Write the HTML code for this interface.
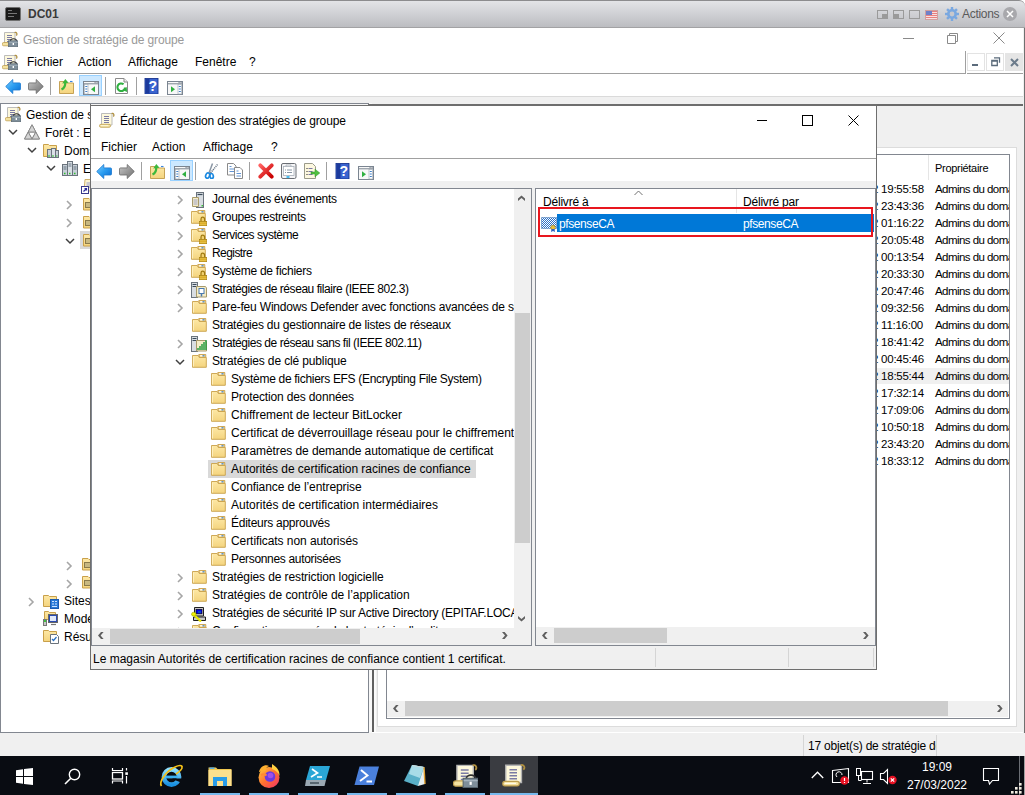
<!DOCTYPE html><html><head><meta charset="utf-8"><style>
*{box-sizing:border-box;margin:0;padding:0}
html,body{width:1025px;height:795px;overflow:hidden;background:#fff;font-family:"Liberation Sans",sans-serif;font-size:12px;color:#000;position:relative}
.a{position:absolute}
.t{position:absolute;white-space:nowrap;line-height:18px;height:18px;margin-top:1px}
svg{position:absolute;overflow:visible}
.clip{position:absolute;overflow:hidden}
.clip svg,.clip .t{position:absolute}
</style></head><body>

<svg width="0" height="0" style="position:absolute">
<defs>
<linearGradient id="gfold" x1="0" y1="0" x2="0" y2="1"><stop offset="0" stop-color="#fde8a6"/><stop offset="1" stop-color="#f4d47e"/></linearGradient>
<linearGradient id="gblue" x1="0" y1="0" x2="1" y2="1"><stop offset="0" stop-color="#7fd0ff"/><stop offset="0.5" stop-color="#2a9cf0"/><stop offset="1" stop-color="#0a6ad0"/></linearGradient>
<linearGradient id="ggray" x1="0" y1="0" x2="1" y2="1"><stop offset="0" stop-color="#c8c8c8"/><stop offset="0.5" stop-color="#9a9a9a"/><stop offset="1" stop-color="#707070"/></linearGradient>
<linearGradient id="gred" x1="0" y1="0" x2="1" y2="1"><stop offset="0" stop-color="#ff6060"/><stop offset="1" stop-color="#c80000"/></linearGradient>
<linearGradient id="gie" x1="0" y1="0" x2="0" y2="1"><stop offset="0" stop-color="#8fe0ff"/><stop offset="1" stop-color="#1a90e0"/></linearGradient>
<linearGradient id="gff" x1="0" y1="0" x2="1" y2="1"><stop offset="0" stop-color="#ffd040"/><stop offset="0.5" stop-color="#ff7030"/><stop offset="1" stop-color="#f0306a"/></linearGradient>
<pattern id="dith" width="2" height="2" patternUnits="userSpaceOnUse"><rect width="2" height="2" fill="#fff"/><rect width="1" height="1" fill="#2a70c8"/><rect x="1" y="1" width="1" height="1" fill="#2a70c8"/></pattern>
<symbol id="fold" viewBox="0 0 16 16">
 <path d="M0.5,1.5 H6.3 L7.3,3.5 H14.3 V13.3 H0.5 Z" fill="url(#gfold)" stroke="#c9a04a" stroke-width="0.9"/>
 <path d="M1.4,2.5 V12.5" stroke="#fff3c8" stroke-width="0.9"/>
 <path d="M6.8,0.5 H13.8 V3.3 H7.5 Z" fill="#f6dc98" stroke="#c9a04a" stroke-width="0.9"/>
 <path d="M8.2,1.8 H10.5" stroke="#fff" stroke-width="1.2"/>
 <path d="M10.5,1.8 H12.5" stroke="#3a86e0" stroke-width="1.2"/>
</symbol>
<symbol id="foldlock" viewBox="0 0 16 16">
 <use href="#fold"/>
 <path d="M10,11.5v-2.5a1.8,1.8 0 0 1 3.6,0v2.5" fill="#f0d070" stroke="#a07a10" stroke-width="1.2"/>
 <rect x="8.3" y="11.3" width="7.4" height="4.6" fill="#d8a820" stroke="#a07a10" stroke-width="0.6"/>
 <path d="M8.5,12.8h7M8.5,14.5h7" stroke="#f0d060" stroke-width="0.6"/>
</symbol>
<symbol id="scroll" viewBox="0 0 16 16">
 <path d="M2.5,1.5 H13 V13 H2.5 Z" fill="#fdf8dc" stroke="#b4b4b4" stroke-width="0.9"/>
 <path d="M12.6,1.6 a1.4,1.6 0 1 1 1.6,2.8" fill="none" stroke="#b09040" stroke-width="1.2"/>
 <path d="M5,4.5h5M5,6.5h5M5,8.5h5M5,10.5h5" stroke="#7a7aa4" stroke-width="1"/>
 <rect x="0.5" y="12.3" width="11" height="3" rx="1.4" fill="#f4e2a0" stroke="#c0a050" stroke-width="0.8"/>
 <path d="M1.8,13.6h7.5" stroke="#fffbe8" stroke-width="0.8"/>
</symbol>
<symbol id="gpmc" viewBox="0 0 16 16">
 <path d="M2.5,1.5 H13 V12 H2.5 Z" fill="#fdf8dc" stroke="#b4b4b4" stroke-width="0.9"/>
 <path d="M12.6,1.6 a1.4,1.6 0 1 1 1.6,2.8" fill="none" stroke="#b09040" stroke-width="1.2"/>
 <path d="M5,4.5h5M5,6.5h5M5,8.5h4M5,10.5h2" stroke="#7a7aa4" stroke-width="1"/>
 <rect x="0.3" y="11.5" width="8" height="3.3" rx="1.4" fill="#f4e2a0" stroke="#c0a050" stroke-width="0.8"/>
 <path d="M8.5,10 a3,2.2 0 0 1 6,0" fill="none" stroke="#303030" stroke-width="1.1"/>
 <rect x="6.5" y="9.8" width="9.5" height="6" fill="#7e8e9a" stroke="#56646e" stroke-width="0.7"/>
 <path d="M6.8,11.3h9" stroke="#a8b6c0" stroke-width="0.8"/>
 <rect x="10.6" y="12" width="1.4" height="2" fill="#fff"/>
</symbol>
<symbol id="back" viewBox="0 0 16 16">
 <path d="M0.7,7.5 L7.8,0.5 V3.9 H14.5 Q15.5,3.9 15.5,5 V10 Q15.5,11 14.5,11 H7.8 V14.5 Z" fill="url(#gblue)" stroke="#1a78d0" stroke-width="0.8" stroke-linejoin="round"/>
</symbol>
<symbol id="fwd" viewBox="0 0 16 16">
 <path d="M15.3,7.5 L8.2,0.5 V3.9 H1.5 Q0.5,3.9 0.5,5 V10 Q0.5,11 1.5,11 H8.2 V14.5 Z" fill="url(#ggray)" stroke="#6a6a6a" stroke-width="0.8" stroke-linejoin="round"/>
</symbol>
<symbol id="fup" viewBox="0 0 16 16">
 <path d="M0.5,2.5 H6 L7,4 H14.5 V14.5 H0.5 Z" fill="url(#gfold)" stroke="#c09a48" stroke-width="0.9"/>
 <path d="M11,2.5 H13.5" stroke="#3a86e0" stroke-width="1.1"/>
 <path d="M2.5,10.5 C4.5,9.5 6.5,7 6.2,3.5" fill="none" stroke="#3cb83c" stroke-width="2.2"/>
 <path d="M3.2,4.5 L6.3,0 L9.5,3.8 Z" fill="#3cb83c"/>
</symbol>
<symbol id="panel" viewBox="0 0 16 16">
 <rect x="0.5" y="1.5" width="15" height="13" fill="#f8f8f8" stroke="#7b8591"/>
 <path d="M0.5,3.8h15" stroke="#7b8591" stroke-width="1"/>
 <path d="M11.5,2.6h1.2M13.5,2.6h1.2" stroke="#7b8591"/>
 <rect x="1.5" y="4.5" width="3.5" height="9.5" fill="#fff" stroke="#9aa3ad" stroke-width="0.6"/>
 <path d="M2.3,6.5h2M2.3,9h2M2.3,11.5h2" stroke="#3f7fc7" stroke-width="1.2"/>
 <path d="M12,6.2 L8,9.2 L12,12.2z" fill="#30b040"/>
</symbol>
<symbol id="apane" viewBox="0 0 16 16">
 <rect x="0.5" y="1.5" width="15" height="13" fill="#f8f8f8" stroke="#7b8591"/>
 <path d="M0.5,3.8h15" stroke="#7b8591" stroke-width="1"/>
 <path d="M11.5,2.6h1.2M13.5,2.6h1.2" stroke="#7b8591"/>
 <rect x="11" y="4.5" width="3.5" height="9.5" fill="#fff" stroke="#9aa3ad" stroke-width="0.6"/>
 <path d="M11.8,6.5h2M11.8,9h2M11.8,11.5h2" stroke="#3f7fc7" stroke-width="1.2"/>
 <path d="M4,6.2 L8,9.2 L4,12.2z" fill="#30b040"/>
</symbol>
<symbol id="refresh" viewBox="0 0 16 16">
 <path d="M1.5,0.5h8.5l3.5,3.5v11.5h-12z" fill="#fff" stroke="#8a8a8a"/>
 <path d="M10,0.5v3.5h3.5" fill="#eee" stroke="#8a8a8a"/>
 <path d="M11,9.5a3.8,3.8 0 1 1 -1.4,-3.2" fill="none" stroke="#2fb040" stroke-width="2.1"/>
 <path d="M8.5,12 L12.8,9 L13,14z" fill="#2fb040"/>
</symbol>
<symbol id="help" viewBox="0 0 16 16">
 <rect x="1" y="0.5" width="13" height="15.5" fill="#3a64d0" stroke="#1a3590" stroke-width="0.9"/>
 <rect x="1.5" y="1" width="4" height="14.5" fill="#1c3a9c"/>
 <text x="8.8" y="13.2" font-family="Liberation Sans" font-size="14" font-weight="bold" fill="#fff" text-anchor="middle">?</text>
</symbol>
<symbol id="cut" viewBox="0 0 16 16">
 <path d="M5,10 L8.5,0.5" stroke="#8a96a4" stroke-width="1.5"/>
 <path d="M6.5,10 L13.5,1.5" stroke="#6a7888" stroke-width="1.5" stroke-dasharray="1.2 0.8"/>
 <ellipse cx="3.6" cy="12.6" rx="1.9" ry="2.7" fill="none" stroke="#1a88e0" stroke-width="1.7" transform="rotate(20 3.6 12.6)"/>
 <ellipse cx="7.6" cy="13" rx="1.7" ry="2.5" fill="none" stroke="#1a88e0" stroke-width="1.7" transform="rotate(-10 7.6 13)"/>
</symbol>
<symbol id="copy" viewBox="0 0 16 16">
 <path d="M0.5,0.5h6l2.5,2.5v9h-8.5z" fill="#fff" stroke="#8a8a8a"/>
 <path d="M7.5,4.5h5.5l2.5,2.5v8.5h-8z" fill="#fff" stroke="#8a8a8a"/>
 <path d="M2.5,3.5h2M2.5,6h4.5M2.5,8.5h4.5M9.5,8h2M9.5,10.5h4.5M9.5,13h4.5" stroke="#3a78c8" stroke-width="0.8"/>
</symbol>
<symbol id="del" viewBox="0 0 16 16">
 <path d="M2.3,2.3 L13.7,13.7 M13.7,2.3 L2.3,13.7" stroke="url(#gred)" stroke-width="3.8" stroke-linecap="round"/>
</symbol>
<symbol id="props" viewBox="0 0 16 16">
 <rect x="0.5" y="0.5" width="14.5" height="15" rx="1.5" fill="#f4f4f6" stroke="#6a6e74"/>
 <rect x="2.5" y="3.5" width="10.5" height="9" fill="#fff" stroke="#a8b0b8" stroke-width="0.8"/>
 <path d="M5,3.5v-1.5h5v1.5" fill="none" stroke="#a8b0b8" stroke-width="0.8"/>
 <path d="M4,7h1M6,7h5M4,9.5h1M6,9.5h5" stroke="#7a8a9a" stroke-width="0.9"/>
 <path d="M5.5,14h3" stroke="#20b0f0" stroke-width="1.6"/>
</symbol>
<symbol id="export" viewBox="0 0 16 16">
 <path d="M0.5,0.5h8l3,3v12h-11z" fill="#fdf8e0" stroke="#9a9a8a"/>
 <path d="M2.5,5.5h1M2.5,8.5h1M2.5,11.5h1" stroke="#222" stroke-width="1"/>
 <path d="M4.5,5.5h4M4.5,8.5h4M4.5,11.5h4" stroke="#6a6aa0" stroke-width="0.9"/>
 <path d="M7,9 h4 v-2.8 l4.8,3.8 l-4.8,3.8 v-2.8 h-4z" fill="#50c040" stroke="#309020" stroke-width="0.5"/>
</symbol>
<symbol id="evlog" viewBox="0 0 16 16">
 <rect x="5.5" y="0.5" width="7" height="15" fill="#d8dde2" stroke="#6a737c"/>
 <path d="M6.5,2.5h5" stroke="#3a4a5a" stroke-width="1.2"/>
 <rect x="10.5" y="13" width="1.5" height="1.5" fill="#3ac03a"/>
 <path d="M1.5,5.5h6v9h-6z" fill="#f4ecc8" stroke="#a89a6a"/>
 <path d="M2.5,8h4M2.5,10h4M2.5,12h4" stroke="#8a92c8" stroke-width="0.8"/>
</symbol>
<symbol id="netw" viewBox="0 0 16 16">
 <rect x="0.5" y="0.5" width="6" height="15" fill="#d8dde2" stroke="#6a737c"/>
 <path d="M1.5,2.5h4M1.5,4.5h4" stroke="#3a4a5a" stroke-width="1"/>
 <path d="M5.5,4.5h9l1,1.5v9h-10z" fill="#f4ecc8" stroke="#a89a6a"/>
 <rect x="8" y="6.5" width="5" height="5" fill="#fff" stroke="#4a7ab0"/>
 <path d="M10.5,11.5v3" stroke="#4a7ab0" stroke-width="1.5"/>
</symbol>
<symbol id="wifi" viewBox="0 0 16 16">
 <rect x="0.5" y="0.5" width="6" height="15" fill="#d8dde2" stroke="#6a737c"/>
 <path d="M1.5,2.5h4M1.5,4.5h4" stroke="#3a4a5a" stroke-width="1"/>
 <path d="M5.5,4.5h9l1,1.5v9h-10z" fill="#f4ecc8" stroke="#a89a6a"/>
 <path d="M7,14v-2M9,14v-4M11,14v-6M13,14v-8M15,14v-10" stroke="#1a9a3a" stroke-width="1.4"/>
</symbol>
<symbol id="ipsec" viewBox="0 0 16 16">
 <path d="M3.5,1.5 H12.5 V10 H3.5 Z" fill="#c8c8c8" stroke="#202020" stroke-width="1"/>
 <rect x="5" y="3.3" width="6" height="4.5" fill="#0000f0" stroke="#000" stroke-width="0.6"/>
 <path d="M7,6 H10" stroke="#10a0a0" stroke-width="0.9"/>
 <path d="M2.5,11 H14.5 V14.5 H2.5 Z" fill="#c8c8c8" stroke="#202020" stroke-width="1"/>
 <path d="M2,8 L10,15.5" stroke="#e8e800" stroke-width="2.2"/>
 <ellipse cx="2.8" cy="8.2" rx="2.3" ry="2" fill="#f0f000" stroke="#909000" stroke-width="0.5"/>
</symbol>
<symbol id="cert" viewBox="0 0 16 16">
 <rect x="0.5" y="1.5" width="15" height="11" fill="url(#dith)"/>
 <path d="M0.5,1.5h15v11h-15z" fill="none" stroke="#3a70b0" stroke-dasharray="1 1"/>
 <circle cx="12" cy="11.5" r="2.3" fill="#e8c040" stroke="#a08020" stroke-width="0.6"/>
 <path d="M10.5,13 l-0.5,3 l2,-1 l2,1 l-0.5,-3" fill="#2a60c0"/>
</symbol>
<symbol id="forest" viewBox="0 0 16 16">
 <path d="M8,0.8 L15.5,15 H0.5 Z" fill="#f2f2f2" stroke="#8a8a8a"/>
 <path d="M4.2,8 H11.8 L8,15 Z" fill="#fff" stroke="#8a8a8a"/>
 <path d="M4.2,8 L0.5,15 H8 Z M11.8,8 L15.5,15 H8 Z M8,0.8 L4.2,8 H11.8Z" fill="#d4d4d4" stroke="#8a8a8a"/>
</symbol>
<symbol id="server" viewBox="0 0 16 16">
 <rect x="0.5" y="4.5" width="5" height="11" fill="#c8d0d8" stroke="#6a737c"/>
 <rect x="5.5" y="1.5" width="5" height="14" fill="#dae0e6" stroke="#6a737c"/>
 <rect x="10.5" y="4.5" width="5" height="11" fill="#c8d0d8" stroke="#6a737c"/>
 <path d="M1.5,7h3M6.5,4h3M6.5,6h3M11.5,7h3M1.5,9h3M11.5,9h3" stroke="#4a5a6a" stroke-width="0.8"/>
 <path d="M2,13.5h1.5M7,13.5h1.5M12,13.5h1.5" stroke="#30c030" stroke-width="1.3"/>
</symbol>
<symbol id="domains" viewBox="0 0 16 16">
 <path d="M0.5,2.5h5l1,1h7v11h-13z" fill="url(#gfold)" stroke="#c9a04a"/>
 <rect x="4.5" y="7.5" width="4" height="8" fill="#c8d0d8" stroke="#6a737c"/>
 <rect x="8.5" y="6.5" width="4" height="9" fill="#dae0e6" stroke="#6a737c"/>
 <rect x="12.5" y="8.5" width="3" height="7" fill="#c8d0d8" stroke="#6a737c"/>
 <path d="M5,14h2M9,14h2M13,14h1.5" stroke="#30c030" stroke-width="1.2"/>
</symbol>
<symbol id="sites" viewBox="0 0 16 16">
 <path d="M0.5,2.5h5l1,1h7v10h-13z" fill="url(#gfold)" stroke="#c9a04a"/>
 <rect x="7.5" y="6.5" width="8" height="9" fill="#2a7ad8" stroke="#1a5ab0"/>
 <path d="M9,8.5h2M12,8.5h2M9,11h2M12,11h2M9,13.5h5" stroke="#cfe4ff" stroke-width="1.2"/>
</symbol>
<symbol id="model" viewBox="0 0 16 16">
 <path d="M1.5,1.5h4l1,1h6v7h-11z" fill="url(#gfold)" stroke="#c9a04a"/>
 <rect x="5.5" y="4.5" width="9" height="8" fill="#2a4ab0" stroke="#666"/>
 <rect x="7" y="6" width="6" height="5" fill="#e0e8f8"/>
 <path d="M8,14.5h5" stroke="#777" stroke-width="1.2"/>
 <rect x="0.5" y="9.5" width="3" height="6" fill="#c8c8c8" stroke="#777"/>
 <rect x="1" y="10" width="2" height="2" fill="#40c040"/>
</symbol>
<symbol id="results" viewBox="0 0 16 16">
 <path d="M0.5,2.5h5l1,1h7v10h-13z" fill="url(#gfold)" stroke="#c9a04a"/>
 <path d="M7.5,6.5h6l2,2v7h-8z" fill="#fff" stroke="#6a737c"/>
 <path d="M9,11 l1.5,1.5 l3,-3.5" fill="none" stroke="#2a70c0" stroke-width="1.2"/>
</symbol>
<symbol id="gpolink" viewBox="0 0 16 16">
 <path d="M4,1.5h10a1.5,1.5 0 0 1 0,2.5h-1v9h-10z" fill="#fbf3d0" stroke="#c9a860" stroke-width="0.9"/>
 <path d="M5.5,5h5M5.5,7h5M5.5,9h5" stroke="#8a92c8" stroke-width="0.9"/>
 <rect x="0.5" y="8.5" width="7" height="7" fill="#fff" stroke="#3a3a8a"/>
 <path d="M2.5,13.5 L5.5,10.5 M3.5,10.5h2v2" fill="none" stroke="#2a2a9a" stroke-width="1.2"/>
</symbol>
<symbol id="ou" viewBox="0 0 16 16">
 <path d="M1.5,2.5h5.5l1,1h7v10.5h-13.5z" fill="url(#gfold)" stroke="#c9a04a"/>
 <rect x="3.5" y="6.5" width="6" height="5" fill="#c8b880" stroke="#8a7a4a"/>
</symbol>
</defs></svg>

<div class="a" style="left:0;top:0;width:1025px;height:28px;background:linear-gradient(#e3e4e7,#bcbdc1);border-top:1px solid #8c8c8e;border-bottom:1px solid #a2a2a4;border-radius:0 6px 0 0"></div>
<div class="a" style="left:5px;top:7px;width:16px;height:14px;background:#1a1a1a;border:1px solid #707070;border-radius:2px"></div>
<div class="a" style="left:8px;top:10px;width:4px;height:1px;background:#777"></div><div class="a" style="left:8px;top:13px;width:9px;height:1px;background:#777"></div><div class="a" style="left:8px;top:16px;width:6px;height:1px;background:#777"></div>
<div class="t" style="left:28px;top:4px;font-weight:bold;color:#3a3a3a;font-size:12px">DC01</div>
<div class="a" style="left:877px;top:10px;width:11px;height:9px;border:1px solid #9a9a9a"></div>
<div class="a" style="left:882px;top:14px;width:6px;height:5px;background:#9a9a9a"></div>
<div class="a" style="left:893px;top:10px;width:11px;height:9px;border:1px solid #9a9a9a"></div>
<div class="a" style="left:893px;top:14px;width:6px;height:5px;background:#9a9a9a"></div>
<div class="a" style="left:909px;top:10px;width:11px;height:9px;border:1px solid #9a9a9a"></div>
<div class="a" style="left:925px;top:10px;width:13px;height:10px;background:repeating-linear-gradient(#e88080 0 1px,#f8e0e0 1px 2px);border:1px solid #d0a0a0"></div><div class="a" style="left:926px;top:11px;width:6px;height:4px;background:#7080c8"></div>
<svg style="left:945px;top:7px" width="14" height="14" viewBox="0 0 14 14"><g fill="#7aa8e0"><circle cx="7" cy="7" r="5"/><rect x="5.8" y="0" width="2.4" height="3" transform="rotate(0 7 7)"/><rect x="5.8" y="0" width="2.4" height="3" transform="rotate(45 7 7)"/><rect x="5.8" y="0" width="2.4" height="3" transform="rotate(90 7 7)"/><rect x="5.8" y="0" width="2.4" height="3" transform="rotate(135 7 7)"/><rect x="5.8" y="0" width="2.4" height="3" transform="rotate(180 7 7)"/><rect x="5.8" y="0" width="2.4" height="3" transform="rotate(225 7 7)"/><rect x="5.8" y="0" width="2.4" height="3" transform="rotate(270 7 7)"/><rect x="5.8" y="0" width="2.4" height="3" transform="rotate(315 7 7)"/></g><circle cx="7" cy="7" r="2.4" fill="#c8c8cc"/></svg>
<div class="t" style="left:962px;top:4px;color:#5a5a5a;font-size:12px;letter-spacing:-0.3px">Actions</div>
<div class="a" style="left:1003px;top:7px;width:14px;height:14px;border-radius:50%;background:#a8a8ac"></div>
<svg style="left:1003px;top:7px" width="14" height="14"><path d="M4,4 L10,10 M10,4 L4,10" stroke="#fff" stroke-width="1.5"/></svg>
<div class="a" style="left:0;top:28px;width:1025px;height:45px;background:#fff;border-right:1px solid #888"></div>
<svg style="left:2px;top:31px" width="16" height="16" viewBox="0 0 16 16"><use href="#gpmc"/></svg>
<div class="t" style="left:23px;top:30px;color:#9a9a9a;letter-spacing:-0.12px">Gestion de stratégie de groupe</div>
<div class="a" style="left:903px;top:38px;width:11px;height:1px;background:#8a8a8a"></div>
<svg style="left:947px;top:32px" width="12" height="12"><path d="M0.5,3.5h8v8h-8z M2.5,3.5v-2h8v8h-2" fill="none" stroke="#8a8a8a"/></svg>
<svg style="left:993px;top:32px" width="12" height="12"><path d="M0.5,0.5 L11.5,11.5 M11.5,0.5 L0.5,11.5" stroke="#8a8a8a" stroke-width="1"/></svg>
<svg style="left:2px;top:54px" width="16" height="16" viewBox="0 0 16 16"><use href="#gpmc"/></svg>
<div class="t" style="left:27px;top:52px;">Fichier</div>
<div class="t" style="left:78px;top:52px;">Action</div>
<div class="t" style="left:128px;top:52px;">Affichage</div>
<div class="t" style="left:195px;top:52px;">Fenêtre</div>
<div class="t" style="left:249px;top:52px;">?</div>
<div class="a" style="left:0;top:73px;width:966px;height:1px;background:#a0a0a0"></div>
<div class="a" style="left:965px;top:51px;width:1px;height:23px;background:#a0a0a0"></div>
<div class="a" style="left:967px;top:73px;width:58px;height:1px;background:#a0a0a0"></div>
<div class="a" style="left:967px;top:53px;width:18px;height:18px;border:1px solid #e3e3e3"></div>
<div class="a" style="left:986px;top:53px;width:18px;height:18px;border:1px solid #e3e3e3"></div>
<div class="a" style="left:1005px;top:53px;width:18px;height:18px;background:#e5e5e5"></div>
<div class="a" style="left:972px;top:64px;width:6px;height:2px;background:#5b6b7b"></div>
<svg style="left:991px;top:57px" width="10" height="10"><path d="M3,0.8h5.5v5M0.8,3.5h5.5v5h-5.5z M0.8,4h5.5" fill="none" stroke="#5b6b7b" stroke-width="1.3"/></svg>
<svg style="left:1010px;top:58px" width="9" height="9"><path d="M1,1 L8,8 M8,1 L1,8" stroke="#6b7b8b" stroke-width="2"/></svg>
<div class="a" style="left:0;top:74px;width:1025px;height:22px;background:#fff"></div>
<svg style="left:5px;top:79px" width="16" height="16" viewBox="0 0 16 16"><use href="#back"/></svg>
<svg style="left:28px;top:79px" width="16" height="16" viewBox="0 0 16 16"><use href="#fwd"/></svg>
<div class="a" style="left:50px;top:77px;width:1px;height:18px;background:#a0a0a0"></div>
<svg style="left:59px;top:79px" width="16" height="16" viewBox="0 0 16 16"><use href="#fup"/></svg>
<div class="a" style="left:79px;top:75px;width:23px;height:21px;background:#cce8ff;border:1px solid #99d1ff"></div>
<svg style="left:83px;top:80px" width="16" height="16" viewBox="0 0 16 16"><use href="#panel"/></svg>
<div class="a" style="left:105px;top:77px;width:1px;height:18px;background:#a0a0a0"></div>
<svg style="left:114px;top:78px" width="16" height="16" viewBox="0 0 16 16"><use href="#refresh"/></svg>
<div class="a" style="left:136px;top:77px;width:1px;height:18px;background:#a0a0a0"></div>
<svg style="left:144px;top:78px" width="16" height="16" viewBox="0 0 16 16"><use href="#help"/></svg>
<svg style="left:167px;top:80px" width="16" height="16" viewBox="0 0 16 16"><use href="#apane"/></svg>
<div class="a" style="left:0;top:96px;width:1025px;height:8px;background:#f0f0f0;border-top:1px solid #dadada"></div>
<div class="a" style="left:0;top:103px;width:369px;height:630px;background:#fff;border:1px solid #828790"></div>
<svg style="left:5px;top:106px" width="16" height="16" viewBox="0 0 16 16"><use href="#gpmc"/></svg>
<div class="t" style="left:26px;top:105px;">Gestion de stratégie de groupe</div>
<svg style="left:8px;top:129px" width="10" height="8"><polyline points="1,1 5,5 9,1" fill="none" stroke="#404040" stroke-width="1.5"/></svg>
<svg style="left:24px;top:124px" width="16" height="16" viewBox="0 0 16 16"><use href="#forest"/></svg>
<div class="t" style="left:45px;top:123px;">Forêt : EPITAF.LOCAL</div>
<svg style="left:27px;top:147px" width="10" height="8"><polyline points="1,1 5,5 9,1" fill="none" stroke="#404040" stroke-width="1.5"/></svg>
<svg style="left:43px;top:142px" width="16" height="16" viewBox="0 0 16 16"><use href="#domains"/></svg>
<div class="t" style="left:64px;top:141px;">Domaines</div>
<svg style="left:46px;top:165px" width="10" height="8"><polyline points="1,1 5,5 9,1" fill="none" stroke="#404040" stroke-width="1.5"/></svg>
<svg style="left:62px;top:160px" width="16" height="16" viewBox="0 0 16 16"><use href="#server"/></svg>
<div class="t" style="left:83px;top:159px;">EPITAF.LOCAL</div>
<svg style="left:81px;top:178px" width="16" height="16" viewBox="0 0 16 16"><use href="#gpolink"/></svg>
<svg style="left:66px;top:200px" width="8" height="10"><polyline points="1,1 5,5 1,9" fill="none" stroke="#a6a6a6" stroke-width="1.6"/></svg>
<svg style="left:82px;top:196px" width="16" height="16" viewBox="0 0 16 16"><use href="#ou"/></svg>
<svg style="left:66px;top:218px" width="8" height="10"><polyline points="1,1 5,5 1,9" fill="none" stroke="#a6a6a6" stroke-width="1.6"/></svg>
<svg style="left:82px;top:214px" width="16" height="16" viewBox="0 0 16 16"><use href="#ou"/></svg>
<div class="a" style="left:80px;top:231px;width:40px;height:18px;background:#d9d9d9"></div>
<svg style="left:65px;top:238px" width="10" height="8"><polyline points="1,1 5,5 9,1" fill="none" stroke="#404040" stroke-width="1.5"/></svg>
<svg style="left:82px;top:232px" width="16" height="16" viewBox="0 0 16 16"><use href="#ou"/></svg>
<svg style="left:66px;top:561px" width="8" height="10"><polyline points="1,1 5,5 1,9" fill="none" stroke="#a6a6a6" stroke-width="1.6"/></svg>
<svg style="left:81px;top:556px" width="16" height="16" viewBox="0 0 16 16"><use href="#ou"/></svg>
<svg style="left:66px;top:579px" width="8" height="10"><polyline points="1,1 5,5 1,9" fill="none" stroke="#a6a6a6" stroke-width="1.6"/></svg>
<svg style="left:81px;top:574px" width="16" height="16" viewBox="0 0 16 16"><use href="#ou"/></svg>
<svg style="left:28px;top:597px" width="8" height="10"><polyline points="1,1 5,5 1,9" fill="none" stroke="#a6a6a6" stroke-width="1.6"/></svg>
<svg style="left:43px;top:593px" width="16" height="16" viewBox="0 0 16 16"><use href="#sites"/></svg>
<div class="t" style="left:64px;top:591px;">Sites</div>
<svg style="left:43px;top:610px" width="16" height="16" viewBox="0 0 16 16"><use href="#model"/></svg>
<div class="t" style="left:64px;top:609px;">Modélisation de stratégie de groupe</div>
<svg style="left:43px;top:628px" width="16" height="16" viewBox="0 0 16 16"><use href="#results"/></svg>
<div class="t" style="left:64px;top:627px;">Résultats de stratégie de groupe</div>
<div class="a" style="left:369px;top:103px;width:3px;height:630px;background:#f8f8f8"></div>
<div class="a" style="left:372px;top:104px;width:652px;height:629px;background:#f0f0f0;border-left:2px solid #606060;border-top:2px solid #6a6a6a;border-right:1px solid #e3e3e3;border-bottom:1px solid #e3e3e3"></div>
<div class="a" style="left:374px;top:106px;width:2px;height:626px;background:#fafafa"></div>
<div class="a" style="left:377px;top:147px;width:640px;height:580px;background:#fff;border:1px solid #dcdcdc"></div>
<div class="a" style="left:372px;top:732px;width:651px;height:1px;background:#fff"></div>
<div class="a" style="left:1023px;top:28px;width:2px;height:728px;background:#f0f0f0;border-right:1px solid #707070"></div>
<div class="a" style="left:386px;top:154px;width:624px;height:565px;background:#fff;border:1px solid #828790"></div>
<div class="a" style="left:928px;top:155px;width:1px;height:25px;background:#e5e5e5"></div>
<div class="t" style="left:935px;top:158px;font-size:11px;letter-spacing:-0.3px">Propriétaire</div>
<div class="clip" style="left:877px;top:180px;width:132px;height:17px"><div class="t" style="left:-5px;top:-1px;font-size:11.5px;letter-spacing:-0.25px">2 19:55:58</div><div class="t" style="left:58px;top:-1px;font-size:11.5px;letter-spacing:-0.55px">Admins du domaine</div></div>
<div class="clip" style="left:877px;top:197px;width:132px;height:17px"><div class="t" style="left:-5px;top:-1px;font-size:11.5px;letter-spacing:-0.25px">2 23:43:36</div><div class="t" style="left:58px;top:-1px;font-size:11.5px;letter-spacing:-0.55px">Admins du domaine</div></div>
<div class="clip" style="left:877px;top:214px;width:132px;height:17px"><div class="t" style="left:-5px;top:-1px;font-size:11.5px;letter-spacing:-0.25px">2 01:16:22</div><div class="t" style="left:58px;top:-1px;font-size:11.5px;letter-spacing:-0.55px">Admins du domaine</div></div>
<div class="clip" style="left:877px;top:231px;width:132px;height:17px"><div class="t" style="left:-5px;top:-1px;font-size:11.5px;letter-spacing:-0.25px">2 20:05:48</div><div class="t" style="left:58px;top:-1px;font-size:11.5px;letter-spacing:-0.55px">Admins du domaine</div></div>
<div class="clip" style="left:877px;top:248px;width:132px;height:17px"><div class="t" style="left:-5px;top:-1px;font-size:11.5px;letter-spacing:-0.25px">2 00:13:54</div><div class="t" style="left:58px;top:-1px;font-size:11.5px;letter-spacing:-0.55px">Admins du domaine</div></div>
<div class="clip" style="left:877px;top:265px;width:132px;height:17px"><div class="t" style="left:-5px;top:-1px;font-size:11.5px;letter-spacing:-0.25px">2 20:33:30</div><div class="t" style="left:58px;top:-1px;font-size:11.5px;letter-spacing:-0.55px">Admins du domaine</div></div>
<div class="clip" style="left:877px;top:282px;width:132px;height:17px"><div class="t" style="left:-5px;top:-1px;font-size:11.5px;letter-spacing:-0.25px">2 20:47:46</div><div class="t" style="left:58px;top:-1px;font-size:11.5px;letter-spacing:-0.55px">Admins du domaine</div></div>
<div class="clip" style="left:877px;top:299px;width:132px;height:17px"><div class="t" style="left:-5px;top:-1px;font-size:11.5px;letter-spacing:-0.25px">2 09:32:56</div><div class="t" style="left:58px;top:-1px;font-size:11.5px;letter-spacing:-0.55px">Admins du domaine</div></div>
<div class="clip" style="left:877px;top:316px;width:132px;height:17px"><div class="t" style="left:-5px;top:-1px;font-size:11.5px;letter-spacing:-0.25px">2 11:16:00</div><div class="t" style="left:58px;top:-1px;font-size:11.5px;letter-spacing:-0.55px">Admins du domaine</div></div>
<div class="clip" style="left:877px;top:333px;width:132px;height:17px"><div class="t" style="left:-5px;top:-1px;font-size:11.5px;letter-spacing:-0.25px">2 18:41:42</div><div class="t" style="left:58px;top:-1px;font-size:11.5px;letter-spacing:-0.55px">Admins du domaine</div></div>
<div class="clip" style="left:877px;top:350px;width:132px;height:17px"><div class="t" style="left:-5px;top:-1px;font-size:11.5px;letter-spacing:-0.25px">2 00:45:46</div><div class="t" style="left:58px;top:-1px;font-size:11.5px;letter-spacing:-0.55px">Admins du domaine</div></div>
<div class="a" style="left:877px;top:368px;width:132px;height:16px;background:#f0f0f0"></div>
<div class="clip" style="left:877px;top:367px;width:132px;height:17px"><div class="t" style="left:-5px;top:-1px;font-size:11.5px;letter-spacing:-0.25px">2 18:55:44</div><div class="t" style="left:58px;top:-1px;font-size:11.5px;letter-spacing:-0.55px">Admins du domaine</div></div>
<div class="clip" style="left:877px;top:384px;width:132px;height:17px"><div class="t" style="left:-5px;top:-1px;font-size:11.5px;letter-spacing:-0.25px">2 17:32:14</div><div class="t" style="left:58px;top:-1px;font-size:11.5px;letter-spacing:-0.55px">Admins du domaine</div></div>
<div class="clip" style="left:877px;top:401px;width:132px;height:17px"><div class="t" style="left:-5px;top:-1px;font-size:11.5px;letter-spacing:-0.25px">2 17:09:06</div><div class="t" style="left:58px;top:-1px;font-size:11.5px;letter-spacing:-0.55px">Admins du domaine</div></div>
<div class="clip" style="left:877px;top:418px;width:132px;height:17px"><div class="t" style="left:-5px;top:-1px;font-size:11.5px;letter-spacing:-0.25px">2 10:50:18</div><div class="t" style="left:58px;top:-1px;font-size:11.5px;letter-spacing:-0.55px">Admins du domaine</div></div>
<div class="clip" style="left:877px;top:435px;width:132px;height:17px"><div class="t" style="left:-5px;top:-1px;font-size:11.5px;letter-spacing:-0.25px">2 23:43:20</div><div class="t" style="left:58px;top:-1px;font-size:11.5px;letter-spacing:-0.55px">Admins du domaine</div></div>
<div class="clip" style="left:877px;top:452px;width:132px;height:17px"><div class="t" style="left:-5px;top:-1px;font-size:11.5px;letter-spacing:-0.25px">2 18:33:12</div><div class="t" style="left:58px;top:-1px;font-size:11.5px;letter-spacing:-0.55px">Admins du domaine</div></div>
<div class="a" style="left:387px;top:701px;width:621px;height:16px;background:#f0f0f0"></div>
<div class="a" style="left:405px;top:701px;width:543px;height:15px;background:#cdcdcd"></div>
<svg style="left:393px;top:705px" width="8" height="8"><polygon points="3,0 5.6,0 2.6,3.5 5.6,7 3,7 0,3.5" fill="#606060"/></svg>
<svg style="left:997px;top:705px" width="8" height="8"><polygon points="0,0 2.6,0 5.6,3.5 2.6,7 0,7 3,3.5" fill="#606060"/></svg>
<div class="a" style="left:0;top:733px;width:1025px;height:23px;background:#f0f0f0"></div>
<div class="a" style="left:803px;top:735px;width:1px;height:21px;background:#d5d5d5"></div>
<div class="a" style="left:936px;top:735px;width:1px;height:21px;background:#d5d5d5"></div>
<div class="clip" style="left:804px;top:733px;width:132px;height:23px"><div class="t" style="left:4px;top:3px;letter-spacing:-0.2px">17 objet(s) de stratégie de groupe</div></div>
<div class="a" style="left:90px;top:104px;width:787px;height:566px;background:#fff;border:1px solid #6e6e6e;border-top:2px solid #6e6e6e"></div>
<div class="a" style="left:91px;top:104px;width:277px;height:1px;background:#f4f4f4"></div>
<svg style="left:99px;top:112px" width="16" height="16" viewBox="0 0 16 16"><use href="#scroll"/></svg>
<div class="t" style="left:120px;top:111px;letter-spacing:-0.15px">Éditeur de gestion des stratégies de groupe</div>
<div class="a" style="left:757px;top:120px;width:10px;height:1px;background:#000"></div>
<div class="a" style="left:802px;top:115px;width:11px;height:11px;border:1px solid #000"></div>
<svg style="left:848px;top:115px" width="11" height="11"><path d="M0.5,0.5 L10.5,10.5 M10.5,0.5 L0.5,10.5" stroke="#000" stroke-width="1"/></svg>
<div class="t" style="left:101px;top:137px;">Fichier</div>
<div class="t" style="left:152px;top:137px;">Action</div>
<div class="t" style="left:203px;top:137px;">Affichage</div>
<div class="t" style="left:271px;top:137px;">?</div>
<div class="a" style="left:91px;top:158px;width:785px;height:1px;background:#a0a0a0"></div>
<svg style="left:96px;top:164px" width="16" height="16" viewBox="0 0 16 16"><use href="#back"/></svg>
<svg style="left:119px;top:164px" width="16" height="16" viewBox="0 0 16 16"><use href="#fwd"/></svg>
<div class="a" style="left:141px;top:162px;width:1px;height:18px;background:#a0a0a0"></div>
<svg style="left:150px;top:164px" width="16" height="16" viewBox="0 0 16 16"><use href="#fup"/></svg>
<div class="a" style="left:170px;top:160px;width:23px;height:21px;background:#cce8ff;border:1px solid #99d1ff"></div>
<svg style="left:174px;top:165px" width="16" height="16" viewBox="0 0 16 16"><use href="#panel"/></svg>
<div class="a" style="left:195px;top:162px;width:1px;height:18px;background:#a0a0a0"></div>
<svg style="left:204px;top:163px" width="16" height="16" viewBox="0 0 16 16"><use href="#cut"/></svg>
<svg style="left:227px;top:163px" width="16" height="16" viewBox="0 0 16 16"><use href="#copy"/></svg>
<div class="a" style="left:249px;top:162px;width:1px;height:18px;background:#a0a0a0"></div>
<svg style="left:258px;top:163px" width="16" height="16" viewBox="0 0 16 16"><use href="#del"/></svg>
<svg style="left:281px;top:163px" width="16" height="16" viewBox="0 0 16 16"><use href="#props"/></svg>
<svg style="left:304px;top:163px" width="16" height="16" viewBox="0 0 16 16"><use href="#export"/></svg>
<div class="a" style="left:326px;top:162px;width:1px;height:18px;background:#a0a0a0"></div>
<svg style="left:335px;top:163px" width="16" height="16" viewBox="0 0 16 16"><use href="#help"/></svg>
<svg style="left:358px;top:165px" width="16" height="16" viewBox="0 0 16 16"><use href="#apane"/></svg>
<div class="a" style="left:91px;top:181px;width:785px;height:7px;background:#f0f0f0"></div>
<div class="a" style="left:91px;top:188px;width:441px;height:458px;background:#fff;border:1px solid #828790"></div>
<div class="clip" style="left:92px;top:189px;width:422px;height:439px">
<svg style="left:85px;top:6px" width="8" height="10"><polyline points="1,1 5,5 1,9" fill="none" stroke="#a6a6a6" stroke-width="1.6"/></svg>
<svg style="left:99px;top:3px" width="16" height="16" viewBox="0 0 16 16"><use href="#evlog"/></svg>
<div class="t" style="left:120px;top:0px;letter-spacing:-0.274px">Journal des événements</div>
<svg style="left:85px;top:24px" width="8" height="10"><polyline points="1,1 5,5 1,9" fill="none" stroke="#a6a6a6" stroke-width="1.6"/></svg>
<svg style="left:99px;top:21px" width="16" height="16" viewBox="0 0 16 16"><use href="#foldlock"/></svg>
<div class="t" style="left:120px;top:18px;letter-spacing:-0.277px">Groupes restreints</div>
<svg style="left:85px;top:42px" width="8" height="10"><polyline points="1,1 5,5 1,9" fill="none" stroke="#a6a6a6" stroke-width="1.6"/></svg>
<svg style="left:99px;top:39px" width="16" height="16" viewBox="0 0 16 16"><use href="#foldlock"/></svg>
<div class="t" style="left:120px;top:36px;letter-spacing:-0.49px">Services système</div>
<svg style="left:85px;top:60px" width="8" height="10"><polyline points="1,1 5,5 1,9" fill="none" stroke="#a6a6a6" stroke-width="1.6"/></svg>
<svg style="left:99px;top:57px" width="16" height="16" viewBox="0 0 16 16"><use href="#foldlock"/></svg>
<div class="t" style="left:120px;top:54px;letter-spacing:-0.573px">Registre</div>
<svg style="left:85px;top:78px" width="8" height="10"><polyline points="1,1 5,5 1,9" fill="none" stroke="#a6a6a6" stroke-width="1.6"/></svg>
<svg style="left:99px;top:75px" width="16" height="16" viewBox="0 0 16 16"><use href="#foldlock"/></svg>
<div class="t" style="left:120px;top:72px;letter-spacing:-0.262px">Système de fichiers</div>
<svg style="left:85px;top:96px" width="8" height="10"><polyline points="1,1 5,5 1,9" fill="none" stroke="#a6a6a6" stroke-width="1.6"/></svg>
<svg style="left:99px;top:93px" width="16" height="16" viewBox="0 0 16 16"><use href="#netw"/></svg>
<div class="t" style="left:120px;top:90px;letter-spacing:-0.445px">Stratégies de réseau filaire (IEEE 802.3)</div>
<svg style="left:85px;top:114px" width="8" height="10"><polyline points="1,1 5,5 1,9" fill="none" stroke="#a6a6a6" stroke-width="1.6"/></svg>
<svg style="left:100px;top:111px" width="16" height="16" viewBox="0 0 16 16"><use href="#fold"/></svg>
<div class="t" style="left:120px;top:108px;letter-spacing:-0.18px">Pare-feu Windows Defender avec fonctions avancées de sécurité</div>
<svg style="left:100px;top:129px" width="16" height="16" viewBox="0 0 16 16"><use href="#fold"/></svg>
<div class="t" style="left:120px;top:126px;letter-spacing:-0.228px">Stratégies du gestionnaire de listes de réseaux</div>
<svg style="left:85px;top:150px" width="8" height="10"><polyline points="1,1 5,5 1,9" fill="none" stroke="#a6a6a6" stroke-width="1.6"/></svg>
<svg style="left:99px;top:147px" width="16" height="16" viewBox="0 0 16 16"><use href="#wifi"/></svg>
<div class="t" style="left:120px;top:144px;letter-spacing:-0.458px">Stratégies de réseau sans fil (IEEE 802.11)</div>
<svg style="left:83px;top:170px" width="10" height="8"><polyline points="1,1 5,5 9,1" fill="none" stroke="#404040" stroke-width="1.5"/></svg>
<svg style="left:100px;top:165px" width="16" height="16" viewBox="0 0 16 16"><use href="#fold"/></svg>
<div class="t" style="left:120px;top:162px;letter-spacing:-0.137px">Stratégies de clé publique</div>
<svg style="left:119px;top:183px" width="16" height="16" viewBox="0 0 16 16"><use href="#fold"/></svg>
<div class="t" style="left:139px;top:180px;letter-spacing:-0.307px">Système de fichiers EFS (Encrypting File System)</div>
<svg style="left:119px;top:201px" width="16" height="16" viewBox="0 0 16 16"><use href="#fold"/></svg>
<div class="t" style="left:139px;top:198px;letter-spacing:-0.147px">Protection des données</div>
<svg style="left:119px;top:219px" width="16" height="16" viewBox="0 0 16 16"><use href="#fold"/></svg>
<div class="t" style="left:139px;top:216px;letter-spacing:-0.006px">Chiffrement de lecteur BitLocker</div>
<svg style="left:119px;top:237px" width="16" height="16" viewBox="0 0 16 16"><use href="#fold"/></svg>
<div class="t" style="left:139px;top:234px;letter-spacing:-0.04px">Certificat de déverrouillage réseau pour le chiffrement de lecteur BitLocker</div>
<svg style="left:119px;top:255px" width="16" height="16" viewBox="0 0 16 16"><use href="#fold"/></svg>
<div class="t" style="left:139px;top:252px;letter-spacing:-0.083px">Paramètres de demande automatique de certificat</div>
<div class="a" style="left:116px;top:271px;width:268px;height:18px;background:#d9d9d9"></div>
<svg style="left:119px;top:273px" width="16" height="16" viewBox="0 0 16 16"><use href="#fold"/></svg>
<div class="t" style="left:139px;top:270px;letter-spacing:-0.039px">Autorités de certification racines de confiance</div>
<svg style="left:119px;top:291px" width="16" height="16" viewBox="0 0 16 16"><use href="#fold"/></svg>
<div class="t" style="left:139px;top:288px;letter-spacing:-0.086px">Confiance de l’entreprise</div>
<svg style="left:119px;top:309px" width="16" height="16" viewBox="0 0 16 16"><use href="#fold"/></svg>
<div class="t" style="left:139px;top:306px;letter-spacing:0.006px">Autorités de certification intermédiaires</div>
<svg style="left:119px;top:327px" width="16" height="16" viewBox="0 0 16 16"><use href="#fold"/></svg>
<div class="t" style="left:139px;top:324px;letter-spacing:-0.259px">Éditeurs approuvés</div>
<svg style="left:119px;top:345px" width="16" height="16" viewBox="0 0 16 16"><use href="#fold"/></svg>
<div class="t" style="left:139px;top:342px;letter-spacing:-0.072px">Certificats non autorisés</div>
<svg style="left:119px;top:363px" width="16" height="16" viewBox="0 0 16 16"><use href="#fold"/></svg>
<div class="t" style="left:139px;top:360px;letter-spacing:-0.319px">Personnes autorisées</div>
<svg style="left:85px;top:384px" width="8" height="10"><polyline points="1,1 5,5 1,9" fill="none" stroke="#a6a6a6" stroke-width="1.6"/></svg>
<svg style="left:100px;top:381px" width="16" height="16" viewBox="0 0 16 16"><use href="#fold"/></svg>
<div class="t" style="left:120px;top:378px;letter-spacing:-0.107px">Stratégies de restriction logicielle</div>
<svg style="left:85px;top:402px" width="8" height="10"><polyline points="1,1 5,5 1,9" fill="none" stroke="#a6a6a6" stroke-width="1.6"/></svg>
<svg style="left:100px;top:399px" width="16" height="16" viewBox="0 0 16 16"><use href="#fold"/></svg>
<div class="t" style="left:120px;top:396px;letter-spacing:-0.047px">Stratégies de contrôle de l’application</div>
<svg style="left:85px;top:420px" width="8" height="10"><polyline points="1,1 5,5 1,9" fill="none" stroke="#a6a6a6" stroke-width="1.6"/></svg>
<svg style="left:99px;top:417px" width="16" height="16" viewBox="0 0 16 16"><use href="#ipsec"/></svg>
<div class="t" style="left:120px;top:414px;letter-spacing:-0.24px">Stratégies de sécurité IP sur Active Directory (EPITAF.LOCAL)</div>
<svg style="left:85px;top:438px" width="8" height="10"><polyline points="1,1 5,5 1,9" fill="none" stroke="#a6a6a6" stroke-width="1.6"/></svg>
<svg style="left:100px;top:435px" width="16" height="16" viewBox="0 0 16 16"><use href="#fold"/></svg>
<div class="t" style="left:120px;top:432px;letter-spacing:-0.25px">Configuration avancée de la stratégie d’audit</div>
</div>
<div class="a" style="left:514px;top:189px;width:17px;height:439px;background:#f0f0f0"></div>
<div class="a" style="left:515px;top:313px;width:15px;height:230px;background:#cdcdcd"></div>
<svg style="left:518px;top:196px" width="8" height="8"><polygon points="0,2.6 3.5,-0.4 7,2.6 7,5 3.5,2 0,5" fill="#606060"/></svg>
<svg style="left:518px;top:616px" width="8" height="8"><polygon points="0,0 3.5,3 7,0 7,2.4 3.5,5.4 0,2.4" fill="#606060"/></svg>
<div class="a" style="left:92px;top:628px;width:422px;height:17px;background:#f0f0f0"></div>
<div class="a" style="left:110px;top:629px;width:250px;height:15px;background:#cdcdcd"></div>
<svg style="left:98px;top:632px" width="8" height="8"><polygon points="3,0 5.6,0 2.6,3.5 5.6,7 3,7 0,3.5" fill="#606060"/></svg>
<svg style="left:502px;top:632px" width="8" height="8"><polygon points="0,0 2.6,0 5.6,3.5 2.6,7 0,7 3,3.5" fill="#606060"/></svg>
<div class="a" style="left:514px;top:628px;width:17px;height:17px;background:#f0f0f0"></div>
<div class="a" style="left:532px;top:188px;width:3px;height:458px;background:#f0f0f0"></div>
<div class="a" style="left:535px;top:188px;width:341px;height:458px;background:#fff;border:1px solid #828790"></div>
<div class="a" style="left:736px;top:189px;width:1px;height:24px;background:#e5e5e5"></div>
<svg style="left:634px;top:190px" width="10" height="6"><polyline points="0.5,5 4.5,1 8.5,5" fill="none" stroke="#707070" stroke-width="1"/></svg>
<div class="t" style="left:543px;top:192px;letter-spacing:-0.2px">Délivré à</div>
<div class="t" style="left:743px;top:192px;letter-spacing:-0.2px">Délivré par</div>
<div class="a" style="left:557px;top:214px;width:317px;height:18px;background:#0078d7"></div>
<svg style="left:541px;top:216px" width="16" height="16" viewBox="0 0 16 16"><use href="#cert"/></svg>
<div class="t" style="left:559px;top:214px;color:#fff;letter-spacing:-0.4px">pfsenseCA</div>
<div class="t" style="left:743px;top:214px;color:#fff;letter-spacing:-0.4px">pfsenseCA</div>
<div class="a" style="left:538px;top:207px;width:335px;height:30px;border:2px solid #e8161e"></div>
<div class="a" style="left:536px;top:627px;width:339px;height:18px;background:#f0f0f0"></div>
<div class="a" style="left:554px;top:628px;width:113px;height:15px;background:#cdcdcd"></div>
<svg style="left:542px;top:632px" width="8" height="8"><polygon points="3,0 5.6,0 2.6,3.5 5.6,7 3,7 0,3.5" fill="#606060"/></svg>
<svg style="left:863px;top:632px" width="8" height="8"><polygon points="0,0 2.6,0 5.6,3.5 2.6,7 0,7 3,3.5" fill="#606060"/></svg>
<div class="a" style="left:91px;top:646px;width:785px;height:23px;background:#f0f0f0"></div>
<div class="a" style="left:655px;top:648px;width:1px;height:19px;background:#d5d5d5"></div>
<div class="a" style="left:788px;top:648px;width:1px;height:19px;background:#d5d5d5"></div>
<div class="a" style="left:873px;top:648px;width:1px;height:19px;background:#d5d5d5"></div>
<div class="t" style="left:93px;top:649px;">Le magasin Autorités de certification racines de confiance contient 1 certificat.</div>
<div class="a" style="left:0;top:756px;width:1025px;height:39px;background:#090c12"></div>
<div class="a" style="left:490px;top:756px;width:48px;height:39px;background:#3a3c41"></div>
<div class="a" style="left:200px;top:793px;width:40px;height:2px;background:#76b9ed"></div>
<div class="a" style="left:249px;top:793px;width:40px;height:2px;background:#76b9ed"></div>
<div class="a" style="left:298px;top:793px;width:40px;height:2px;background:#76b9ed"></div>
<div class="a" style="left:347px;top:793px;width:40px;height:2px;background:#76b9ed"></div>
<div class="a" style="left:396px;top:793px;width:40px;height:2px;background:#76b9ed"></div>
<div class="a" style="left:445px;top:793px;width:40px;height:2px;background:#76b9ed"></div>
<div class="a" style="left:490px;top:793px;width:48px;height:2px;background:#76b9ed"></div>
<svg style="left:16px;top:768px" width="17" height="17"><path d="M0,2.3 L7,1.3 V8 H0z M8,1.1 L17,0 V8 H8z M0,9 H7 V15.7 L0,14.7z M8,9 H17 V17 L8,15.9z" fill="#fff"/></svg>
<svg style="left:64px;top:768px" width="17" height="17"><circle cx="10.5" cy="6.5" r="5.2" fill="none" stroke="#fff" stroke-width="1.4"/><path d="M6.8,10.2 L1,16" stroke="#fff" stroke-width="1.6"/></svg>
<svg style="left:111px;top:767px" width="19" height="18" viewBox="0 0 19 18"><path d="M1.5,1 V3.5 H11.5 V1 M1.5,16.5 V14 H11.5 V16.5" fill="none" stroke="#fff" stroke-width="1.2"/><rect x="1.5" y="5.5" width="10" height="6.5" fill="none" stroke="#fff" stroke-width="1.3"/><path d="M15.5,1 V3.5 M15.5,9 V16.5" stroke="#fff" stroke-width="1.2"/><rect x="14.3" y="5.3" width="2.6" height="2.6" fill="#fff"/></svg>
<svg style="left:159px;top:763px" width="26" height="26" viewBox="0 0 26 26"><circle cx="12.5" cy="14" r="7.6" fill="none" stroke="url(#gie)" stroke-width="4.6"/><rect x="7" y="12.6" width="11.5" height="2.8" fill="#3ab0f0"/><path d="M13,15.4 H22 V19.5 L17,17.5 Z" fill="#090c12"/><path d="M2.5,23 C-0.5,19 7,8 16,4 C20,2 23,2 23,4 C23.5,6 20,9 17,11" fill="none" stroke="#f4c018" stroke-width="1.7"/></svg>
<svg style="left:208px;top:766px" width="24" height="21" viewBox="0 0 24 21"><path d="M0.5,1.5 H8 L9.5,3 H23.5 V20 H0.5 Z" fill="#f0c850"/><rect x="0.5" y="4" width="23" height="16" fill="#fde08e"/><rect x="1.5" y="1.5" width="5" height="1.5" fill="#5ab0e8"/><path d="M5,20 V11 H19 V20 H15 V15 H9 V20 Z" fill="#2a9ce8"/></svg>
<svg style="left:256px;top:763px" width="26" height="26" viewBox="0 0 26 26"><circle cx="13" cy="14.5" r="10.5" fill="url(#gff)"/><path d="M3,9 C4,4 9,1 13,3 C10,4 9,6 10,8 Z" fill="#ffb030"/><path d="M16,1 C21,4 24,8 23.5,13 C22,9 19,7 16,6 Z" fill="#ffcf40"/><circle cx="14" cy="13.5" r="5.3" fill="#6a3ae0"/><circle cx="14.5" cy="12.5" r="2.8" fill="#a050e8"/><path d="M5,12 C7,11 9,11 10.5,12.5" fill="none" stroke="#ff8a30" stroke-width="2"/></svg>
<svg style="left:305px;top:765px" width="26" height="22" viewBox="0 0 26 22"><path d="M5,1 H25 L21,15 H1 Z" fill="#2aa6d6"/><path d="M1,15 H21 L19.5,21 H0 Z" fill="#9aa8b2"/><path d="M7,4 L12.5,8 L6,12 M12,12h5" fill="none" stroke="#fff" stroke-width="1.7"/><path d="M5,18 h9" stroke="#2a3a44" stroke-width="1.2"/></svg>
<svg style="left:354px;top:766px" width="26" height="20" viewBox="0 0 26 20"><path d="M5.5,0.5 H25 L20,19 H0.5 Z" fill="#4a80dc"/><path d="M7,4 L13.5,9.5 L6,15 M12.5,15.5h5.5" fill="none" stroke="#fff" stroke-width="1.9"/></svg>
<svg style="left:403px;top:764px" width="24" height="23" viewBox="0 0 24 23"><path d="M9,1 L21,3 L22,20 L15,22 Z" fill="#e8f0f0"/><path d="M9,1 L21,3 L15,22 L1,17 Z" fill="#5ab0c8"/><path d="M9,1 L21,3 L17,14 L6,10 Z" fill="#a8dce8"/><path d="M21,3 L22,20" stroke="#e0a030" stroke-width="1.4"/><path d="M9.5,1.5 L20.5,3.5" stroke="#c8d8d8" stroke-width="1.2"/></svg>
<svg style="left:453px;top:763px" width="25" height="25" viewBox="0 0 16 16"><use href="#gpmc"/></svg>
<svg style="left:502px;top:763px" width="24" height="24" viewBox="0 0 16 16"><use href="#scroll"/></svg>
<svg style="left:811px;top:771px" width="13" height="8"><polyline points="0.8,7 6.5,1.2 12.2,7" fill="none" stroke="#fff" stroke-width="1.3"/></svg>
<svg style="left:832px;top:768px" width="20" height="18"><path d="M0.5,2.5 L16.5,0.5 V14.5 L0.5,14.5z" fill="none" stroke="#fff" stroke-width="1.1"/><path d="M5,9 a3,3 0 1 1 5,-2" fill="none" stroke="#fff"/><circle cx="12.5" cy="12.5" r="4.2" fill="#e81123"/><path d="M12.5,10v3M12.5,14v1" stroke="#fff" stroke-width="1.2"/></svg>
<svg style="left:856px;top:768px" width="18" height="17"><rect x="0.5" y="0.5" width="4" height="7" fill="none" stroke="#fff"/><rect x="5.5" y="3.5" width="11" height="8" fill="none" stroke="#fff" stroke-width="1.1"/><path d="M11,11.5v3M7,15.5h8M2.5,7.5v5h3" fill="none" stroke="#fff"/></svg>
<svg style="left:880px;top:768px" width="18" height="17"><path d="M0.5,5.5h3l4,-4v14l-4,-4h-3z" fill="none" stroke="#fff" stroke-width="1.1"/><circle cx="12.5" cy="12" r="4.2" fill="#e81123"/><path d="M10.8,10.3 L14.2,13.7 M14.2,10.3 L10.8,13.7" stroke="#fff" stroke-width="1.2"/></svg>
<div class="t" style="left:906px;top:757px;width:62px;text-align:center;color:#fff;font-size:12px">19:09</div>
<div class="t" style="left:906px;top:775px;width:62px;text-align:center;color:#fff;font-size:12px">27/03/2022</div>
<svg style="left:983px;top:768px" width="17" height="18"><path d="M0.5,0.5h15v12h-6l-3,3.5l-1,-3.5h-5z" fill="none" stroke="#fff" stroke-width="1.1"/></svg>
<div class="a" style="left:1019px;top:756px;width:1px;height:39px;background:#6a6e74"></div>
<svg style="left:1010px;top:782px" width="14" height="13"><rect x="9" y="1" width="2.6" height="2.6" fill="#f0ece0"/><rect x="5" y="5" width="2.6" height="2.6" fill="#f0ece0"/><rect x="9" y="5" width="2.6" height="2.6" fill="#f0ece0"/><rect x="1" y="9" width="2.6" height="2.6" fill="#f0ece0"/><rect x="5" y="9" width="2.6" height="2.6" fill="#f0ece0"/><rect x="9" y="9" width="2.6" height="2.6" fill="#f0ece0"/></svg>
<div class="a" style="left:1024px;top:756px;width:1px;height:39px;background:#a0a0a0"></div>
</body></html>
